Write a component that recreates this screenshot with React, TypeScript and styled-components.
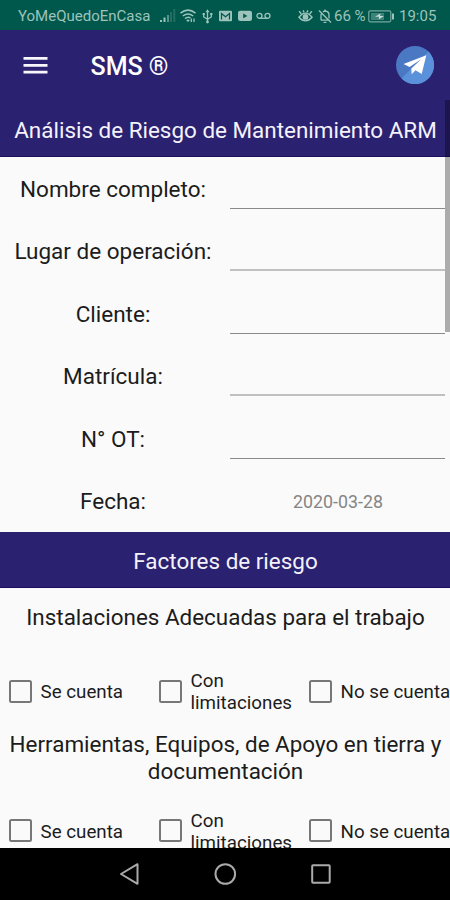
import React from 'react';
import styled, { createGlobalStyle } from 'styled-components';

const GlobalStyle = createGlobalStyle`
  html, body { margin: 0; padding: 0; overflow: hidden; }
  *, *::before, *::after { box-sizing: border-box; }
`;

const Screen = styled.div`
  width: 450px;
  height: 900px;
  display: flex;
  flex-direction: column;
  overflow: hidden;
  background: #fafafa;
  color: #1c1c1c;
  font-family: Roboto, sans-serif;
`;

const StatusBar = styled.header`
  flex: 0 0 30px;
  display: flex;
  align-items: center;
  padding: 2px 14px 0 18px;
  background: #00574b;
  color: #9cc4bc;
  font-size: 15px;
  line-height: 28px;
  white-space: nowrap;
`;

const StatusText = styled.span<{ $width: number; $gap?: number }>`
  flex: none;
  width: ${(p) => p.$width}px;
  margin-left: ${(p) => p.$gap ?? 0}px;
`;

const StatusIcon = styled.svg<{ $gap: number }>`
  flex: none;
  display: block;
  margin-left: ${(p) => p.$gap}px;
`;

const StatusGap = styled.div`
  flex: 1;
`;

const AppBar = styled.div`
  flex: 0 0 70px;
  display: flex;
  align-items: center;
  padding: 0 15px 0 23px;
  background: #2b2171;
`;

const MenuButton = styled.button`
  display: flex;
  width: 25px;
  height: 18px;
  padding: 0;
  border: 0;
  background: none;
`;

const AppTitle = styled.h1`
  flex: 1;
  margin: 3px 0 0 42.5px;
  color: #fff;
  font-size: 25px;
  font-weight: 500;
  line-height: 30px;
`;

const SendButton = styled.button`
  display: flex;
  width: 39px;
  height: 38px;
  padding: 0;
  border: 0;
  background: none;
`;

const Body = styled.main`
  flex: 1;
  min-height: 0;
  overflow: hidden;
  position: relative;
`;

const ScrollThumb = styled.div`
  position: absolute;
  top: 0;
  right: 0;
  width: 5px;
  height: 231.5px;
  background: rgba(0, 0, 0, 0.31);
`;

const Banner = styled.h2`
  display: flex;
  align-items: center;
  justify-content: center;
  height: 56.5px;
  margin: 0;
  padding: 4px 0 0 1px;
  border-bottom: 1px solid #1b0f62;
  background: #2b2171;
  color: #f4f2fa;
  font-size: 22.45px;
  font-weight: 400;
  white-space: nowrap;
`;

const SectionBanner = styled(Banner)`
  padding-top: 3px;
`;

const FieldRow = styled.label`
  display: grid;
  grid-template-columns: 225px 225px;
  align-items: center;
  height: 62.5px;
`;

const FieldLabel = styled.span`
  padding: 2px 0 0 1px;
  font-size: 22.5px;
  line-height: 26.4px;
  text-align: center;
`;

const FieldInput = styled.input<{ $soft: boolean }>`
  align-self: start;
  width: 215px;
  height: ${(p) => (p.$soft ? 52 : 52.5)}px;
  margin: 0 0 0 5px;
  padding: 0 4px;
  border: 0;
  border-bottom: ${(p) => (p.$soft ? '2px solid #c0c0c0' : '1px solid #8a8a8a')};
  border-radius: 0;
  outline: 0;
  background: transparent;
  font: 22.5px Roboto, sans-serif;
`;

const DateValue = styled.span`
  padding: 2px 0 0 1px;
  color: #858585;
  font-size: 17.8px;
  text-align: center;
`;

const Question = styled.p<{ $top: number }>`
  margin: 0;
  padding: ${(p) => p.$top}px 3px 0 4px;
  font-size: 22.45px;
  line-height: 26.4px;
  text-align: center;
`;

const OptionRow = styled.div<{ $top: number }>`
  display: grid;
  grid-template-columns: repeat(3, 150px);
  align-items: center;
  height: 44px;
  margin-top: ${(p) => p.$top}px;
`;

const Option = styled.label`
  display: flex;
  align-items: center;
  padding-left: 9px;
`;

const CheckBox = styled.input`
  appearance: none;
  flex: none;
  width: 23px;
  height: 23px;
  margin: 0 8.5px 0 0;
  border: 2px solid #777;
  border-radius: 2.5px;
`;

const OptionText = styled.span<{ $nowrap: boolean }>`
  padding-top: 1.5px;
  font-size: 18.75px;
  line-height: 22px;
  white-space: ${(p) => (p.$nowrap ? 'nowrap' : 'normal')};
`;

const NavBar = styled.nav`
  flex: 0 0 52.5px;
  display: flex;
  align-items: center;
  justify-content: center;
  gap: 72px;
  background: #000;
`;

const NavButton = styled.button`
  display: flex;
  width: 24px;
  height: 24px;
  padding: 0;
  border: 0;
  background: none;
`;

const fields = ['Nombre completo:', 'Lugar de operación:', 'Cliente:', 'Matrícula:', 'N° OT:'];
const options = ['Se cuenta', 'Con limitaciones', 'No se cuenta'];

function Options({ top }: { top: number }) {
  return (
    <OptionRow $top={top}>
      {options.map((text) => (
        <Option key={text}>
          <CheckBox type="checkbox" />
          <OptionText $nowrap={text !== 'Con limitaciones'}>{text}</OptionText>
        </Option>
      ))}
    </OptionRow>
  );
}

function Status() {
  return (
    <StatusBar>
      <StatusText $width={133}>YoMeQuedoEnCasa</StatusText>
      <StatusIcon $gap={9} width="16" height="14" viewBox="0 0 16 14" fill="#9cc4bc">
        <path d="M0 11h2v2H0zM3.5 8.5h2V13h-2z" />
        <path d="M7 6h2v7H7z" opacity=".55" />
        <path d="M10 3h2v10h-2zM13.3 0h2v13h-2z" opacity=".22" />
      </StatusIcon>
      <StatusIcon $gap={4} width="16" height="14" viewBox="0 0 16 14" fill="none" stroke="#9cc4bc" strokeWidth="1.5">
        <path d="M.5 4.2Q8-2 15.5 4.2M2.8 7Q8 2.8 13.2 7M5 9.6Q8 7.2 10.5 9" />
        <path d="M6.2 11.2 8 13l1.8-1.8Q8 10 6.2 11.2z" fill="#9cc4bc" stroke="none" />
        <path d="M11.3 9.5V13M14 9.5V13" strokeWidth="1.3" />
      </StatusIcon>
      <StatusIcon $gap={6} width="11" height="15" viewBox="0 0 11 15" fill="none" stroke="#9cc4bc" strokeWidth="1.3">
        <path d="M5.5 2v11M1.7 5v3l3.8 2.3L9.3 8V5" />
        <path d="M3.5 3.2 5.5.3l2 2.9zM.6 4h2.2v2H.6zM8.2 4h2.2v2H8.2z" fill="#9cc4bc" stroke="none" />
        <circle cx="5.5" cy="13" r="1.4" fill="#9cc4bc" stroke="none" />
      </StatusIcon>
      <StatusIcon $gap={6} width="13" height="12" viewBox="0 0 13 12">
        <rect x="0" y=".7" width="13" height="10.6" rx="1" fill="#9cc4bc" />
        <path d="M2.5 9.5V3.5l4 3.2 4-3.2v6" fill="none" stroke="#00574b" strokeWidth="1.2" />
      </StatusIcon>
      <StatusIcon $gap={6} width="14" height="12" viewBox="0 0 14 12">
        <rect x="0" y=".8" width="14" height="10.2" rx="2.2" fill="#9cc4bc" />
        <path d="M5.2 3.5v4.8L9.4 5.9z" fill="#00574b" />
      </StatusIcon>
      <StatusIcon $gap={3.5} width="15" height="8" viewBox="0 0 15 8" fill="none" stroke="#9cc4bc" strokeWidth="1.3">
        <circle cx="3.5" cy="3.8" r="2.5" />
        <circle cx="11.5" cy="3.8" r="2.5" />
        <path d="M3.5 6.3h8" />
      </StatusIcon>
      <StatusGap />
      <StatusIcon $gap={0} width="15" height="14" viewBox="0 0 16 14" fill="none" stroke="#9cc4bc" strokeWidth="1.5">
        <path d="M1 8.3Q8-.5 15 8.3 8 16 1 8.3zM1.2 2l2.3 2.5M14.8 2l-2.3 2.5M5.5 1l.8 2M10.5 1l-.8 2" />
        <circle cx="8" cy="8" r="2.3" fill="#9cc4bc" />
      </StatusIcon>
      <StatusIcon $gap={5} width="14" height="15" viewBox="0 0 14 15" fill="none" stroke="#9cc4bc" strokeWidth="1.3">
        <path d="M2.7 11.2h8.8M3 11V6.2q0-1.3.8-2.3M5 2.9Q6 2 7 2q4 .2 4 4.2v3.3M1 1.5l12 12M5.6 13.3h2.8M7 .6V2" />
      </StatusIcon>
      <StatusText $width={32} $gap={2}>66 %</StatusText>
      <StatusIcon $gap={2} width="27" height="13" viewBox="0 0 27 13" fill="none" stroke="#9cc4bc">
        <rect x=".8" y=".8" width="22" height="11" rx="1.5" strokeWidth="1.2" opacity=".75" />
        <path d="M3 3h13v7H3z" fill="#9cc4bc" stroke="none" opacity=".4" />
        <path d="m7 6.7 5.5-3.2-.4 2.4H16l-5.4 3.5.4-2.7z" fill="#c2ddd7" stroke="none" />
        <path d="M25 3.5v6" strokeWidth="2" />
      </StatusIcon>
      <StatusText $width={37} $gap={4}>19:05</StatusText>
    </StatusBar>
  );
}

export default function App() {
  return (
    <>
      <GlobalStyle />
      <Screen>
        <Status />
        <AppBar>
          <MenuButton aria-label="Menú">
            <svg width="25" height="18" viewBox="0 0 25 18" fill="none" stroke="#f7f6fb" strokeWidth="2.8">
              <path d="M.5 2.3h24M.5 9.3h24M.5 16.2h24" />
            </svg>
          </MenuButton>
          <AppTitle>SMS ®</AppTitle>
          <SendButton aria-label="Enviar">
            <svg width="38" height="38" viewBox="0 0 38 38">
              <circle cx="19" cy="19" r="19" fill="#4b78c3" />
              <path d="M32.5 5.5A19 19 0 0 1 5.5 32.5z" fill="#5b91da" />
              <path d="M30.3 9.3 7.5 18l6.1 3.1L25.5 13 15.3 22.4l.4 5.8 3.8-3.9 6.2 3.8z" fill="#fff" />
            </svg>
          </SendButton>
        </AppBar>
        <Body>
          <Banner>Análisis de Riesgo de Mantenimiento ARM</Banner>
          {fields.map((label, i) => (
            <FieldRow key={label}>
              <FieldLabel>{label}</FieldLabel>
              <FieldInput $soft={i % 2 === 1} />
            </FieldRow>
          ))}
          <FieldRow as="div">
            <FieldLabel>Fecha:</FieldLabel>
            <DateValue>2020-03-28</DateValue>
          </FieldRow>
          <SectionBanner>Factores de riesgo</SectionBanner>
          <Question $top={15.5}>Instalaciones Adecuadas para el trabajo</Question>
          <Options top={38.5} />
          <Question $top={19}>Herramientas, Equipos, de Apoyo en tierra y documentación</Question>
          <Options top={24} />
          <ScrollThumb />
        </Body>
        <NavBar>
          <NavButton aria-label="Atrás">
            <svg width="24" height="24" viewBox="0 0 24 24" fill="none" stroke="#aaa" strokeWidth="2">
              <path d="M20.5 2.2v19.6L4 12z" strokeLinejoin="round" />
            </svg>
          </NavButton>
          <NavButton aria-label="Inicio">
            <svg width="24" height="24" viewBox="0 0 24 24" fill="none" stroke="#aaa" strokeWidth="2">
              <circle cx="12.3" cy="12" r="9.8" />
            </svg>
          </NavButton>
          <NavButton aria-label="Recientes">
            <svg width="24" height="24" viewBox="0 0 24 24" fill="none" stroke="#aaa" strokeWidth="2">
              <rect x="3.2" y="3.2" width="17.5" height="17.5" rx=".8" />
            </svg>
          </NavButton>
        </NavBar>
      </Screen>
    </>
  );
}
